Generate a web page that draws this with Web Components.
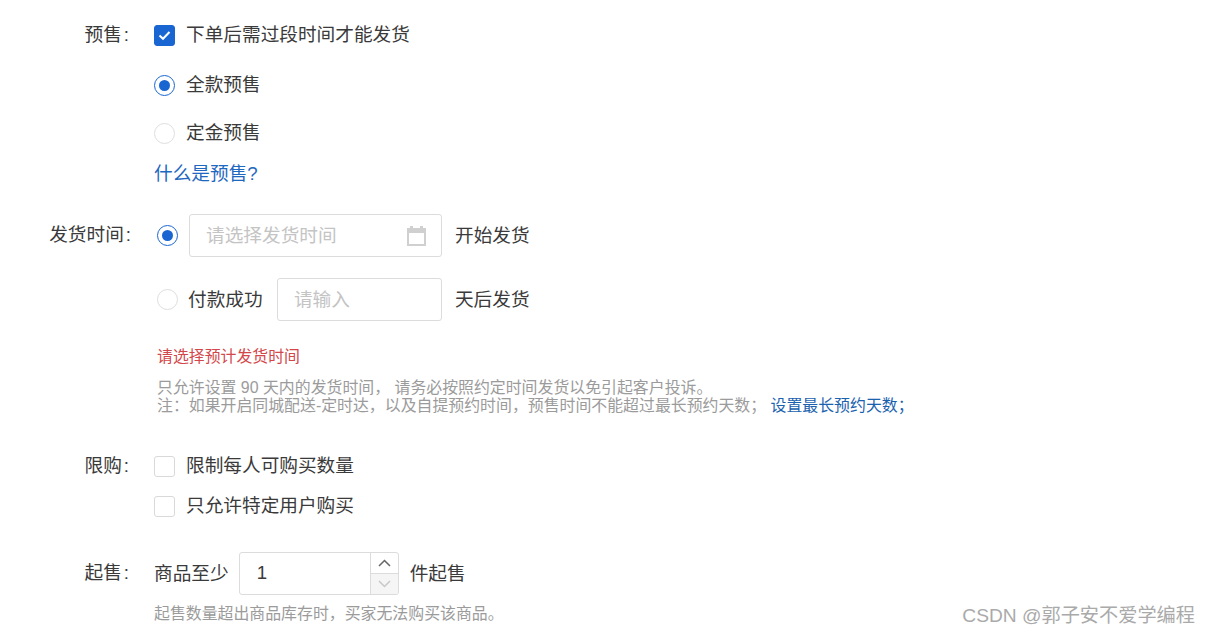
<!DOCTYPE html>
<html lang="zh-CN">
<head>
<meta charset="utf-8">
<title>预售设置</title>
<style>
  html, body { margin: 0; background: #fff; }
  body {
    width: 1210px;
    height: 635px;
    overflow: hidden;
    font: 18.67px/30px "Liberation Sans", "Noto Sans CJK SC", sans-serif;
    color: #3a3a3a;
  }
  form-page { --blue: #1966d2; }
</style>
</head>
<body>
<form-page>
  <form-row label="预售" label-pad="25" style="margin-top:20px">
    <check-box checked>下单后需过段时间才能发货</check-box>
    <radio-box checked style="margin-top:20px">全款预售</radio-box>
    <radio-box style="margin-top:18px">定金预售</radio-box>
    <help-link style="margin-top:11px">什么是预售?</help-link>
  </form-row>

  <form-row label="发货时间" label-width="157" label-pad="26" label-height="43" style="margin-top:25px">
    <inline-row>
      <radio-box checked></radio-box>
      <text-field width="253" placeholder="请选择发货时间" calendar style="margin-left:11px"></text-field>
      <span style="margin-left:13px">开始发货</span>
    </inline-row>
    <inline-row style="margin-top:21px">
      <radio-box style="--radio-gap:10px">付款成功</radio-box>
      <text-field width="165" placeholder="请输入" style="margin-left:14.3px"></text-field>
      <span style="margin-left:13px">天后发货</span>
    </inline-row>
    <hint-text kind="error" style="margin-top:26px">请选择预计发货时间</hint-text>
    <hint-text style="margin-top:12px">只允许设置 90 天内的发货时间， 请务必按照约定时间发货以免引起客户投诉。</hint-text>
    <hint-text>注：如果开启同城配送-定时达，以及自提预约时间，预售时间不能超过最长预约天数；<help-link small>设置最长预约天数；</help-link></hint-text>
  </form-row>

  <form-row label="限购" label-pad="25" style="margin-top:36px">
    <check-box>限制每人可购买数量</check-box>
    <check-box style="margin-top:10px">只允许特定用户购买</check-box>
  </form-row>

  <form-row label="起售" label-pad="25" style="margin-top:31px" label-height="43">
    <inline-row>
      <span>商品至少</span>
      <number-stepper value="1" style="margin-left:10px"></number-stepper>
      <span style="margin-left:11px">件起售</span>
    </inline-row>
    <hint-text style="margin-top:10px">起售数量超出商品库存时，买家无法购买该商品。</hint-text>
  </form-row>

  <water-mark>CSDN @郭子安不爱学编程</water-mark>
</form-page>

<script>
class FormPage extends HTMLElement {
  constructor() {
    super();
    this.attachShadow({ mode: 'open' });
    this.shadowRoot.innerHTML = `
      <style>:host{display:block;position:relative;height:635px;overflow:hidden;}
      .flow{display:flow-root;}</style>
      <div class="flow"><slot></slot></div>`;
  }
}

class FormRow extends HTMLElement {
  constructor() {
    super();
    this.attachShadow({ mode: 'open' });
    const w = this.getAttribute('label-width') || 154;
    const h = this.getAttribute('label-height') || 30;
    const pad = this.getAttribute('label-pad') || 25;
    this.shadowRoot.innerHTML = `
      <style>
        :host{display:grid;grid-template-columns:${w}px 1fr;}
        .label{box-sizing:border-box;padding-right:${pad}px;text-align:right;height:${h}px;line-height:${h - 1}px;white-space:pre;}
        .colon{margin-left:2px;}
        .body{display:flex;flex-direction:column;align-items:flex-start;}
      </style>
      <div class="label">${this.getAttribute('label')}<span class="colon">:</span></div>
      <div class="body"><slot></slot></div>`;
  }
}

class InlineRow extends HTMLElement {
  constructor() {
    super();
    this.attachShadow({ mode: 'open' });
    this.shadowRoot.innerHTML = `
      <style>:host{display:flex;align-items:center;white-space:nowrap;}</style><slot></slot>`;
  }
}

class CheckBox extends HTMLElement {
  constructor() {
    super();
    this.attachShadow({ mode: 'open' });
    const on = this.hasAttribute('checked');
    this.shadowRoot.innerHTML = `
      <style>
        :host{display:flex;align-items:center;height:30px;white-space:nowrap;}
        .box{box-sizing:border-box;width:21px;height:21px;border-radius:3px;margin-right:11px;display:flex;align-items:center;justify-content:center;
          border:1px solid ${on ? 'var(--blue)' : '#d9d9d9'};background:${on ? 'var(--blue)' : '#fff'};}
      </style>
      <span class="box">${on ? '<svg width="13" height="11" viewBox="0 0 13 11"><path d="M1.5 5.5L5 8.8 11.5 2" fill="none" stroke="#fff" stroke-width="2"/></svg>' : ''}</span>
      <slot></slot>`;
  }
}

class RadioBox extends HTMLElement {
  constructor() {
    super();
    this.attachShadow({ mode: 'open' });
    const on = this.hasAttribute('checked');
    this.shadowRoot.innerHTML = `
      <style>
        :host{display:flex;align-items:center;height:30px;white-space:nowrap;}
        .dot{box-sizing:border-box;width:21px;height:21px;border-radius:50%;display:flex;align-items:center;justify-content:center;
          border:1px solid ${on ? 'var(--blue)' : '#dedede'};background:#fff;}
        .dot i{width:11px;height:11px;border-radius:50%;background:var(--blue);}
        .text{margin-left:var(--radio-gap, 11px);}
      </style>
      <span class="dot">${on ? '<i></i>' : ''}</span>
      ${this.textContent.trim() ? '<span class="text"><slot></slot></span>' : ''}`;
  }
}

class HelpLink extends HTMLElement {
  constructor() {
    super();
    this.attachShadow({ mode: 'open' });
    const small = this.hasAttribute('small');
    this.shadowRoot.innerHTML = `
      <style>:host{display:${small ? 'inline' : 'block'};color:${small ? '#1a62ae' : '#1f68c0'};}</style><slot></slot>`;
  }
}

class TextField extends HTMLElement {
  constructor() {
    super();
    this.attachShadow({ mode: 'open' });
    this.shadowRoot.innerHTML = `
      <style>
        :host{box-sizing:border-box;display:flex;align-items:center;justify-content:space-between;
          width:${this.getAttribute('width')}px;height:43px;padding:0 15px 0 16px;
          border:1px solid #dcdcdc;border-radius:3px;background:#fff;color:#c4c4c4;white-space:nowrap;}
      </style>
      <span>${this.getAttribute('placeholder')}</span>
      ${this.hasAttribute('calendar') ? `<svg width="19" height="20" viewBox="0 0 19 20" fill="#d0d0d0"><path fill-rule="evenodd" d="M3 0h3v2h7V0h3v2h3v18H0V2h3zM2 7v11h15V7z"/></svg>` : ''}`;
  }
}

class NumberStepper extends HTMLElement {
  constructor() {
    super();
    this.attachShadow({ mode: 'open' });
    this.shadowRoot.innerHTML = `
      <style>
        :host{box-sizing:border-box;display:flex;width:160px;height:43px;border:1px solid #dcdcdc;border-radius:3px;background:#fff;}
        .value{flex:1;padding-left:17px;line-height:40px;}
        .btns{width:27px;display:flex;flex-direction:column;border-left:1px solid #dcdcdc;}
        .btns span{flex:1;display:flex;align-items:center;justify-content:center;}
        .btns .down{background:#f5f5f5;border-top:1px solid #dcdcdc;border-radius:0 0 3px 0;}
      </style>
      <div class="value">${this.getAttribute('value')}</div>
      <div class="btns">
        <span><svg width="13" height="8" viewBox="0 0 13 8"><path d="M1 7l5.5-5.5L12 7" fill="none" stroke="#666" stroke-width="1.5"/></svg></span>
        <span class="down"><svg width="13" height="8" viewBox="0 0 13 8"><path d="M1 1l5.5 5.5L12 1" fill="none" stroke="#c8c8c8" stroke-width="1.5"/></svg></span>
      </div>`;
  }
}

class HintText extends HTMLElement {
  constructor() {
    super();
    this.attachShadow({ mode: 'open' });
    const err = this.getAttribute('kind') === 'error';
    this.shadowRoot.innerHTML = `
      <style>:host{display:block;font-size:15.9px;white-space:nowrap;line-height:${err ? 20 : 18}px;color:${err ? '#d2474a' : '#9b9b9b'};}</style><slot></slot>`;
  }
}

class WaterMark extends HTMLElement {
  constructor() {
    super();
    this.attachShadow({ mode: 'open' });
    this.shadowRoot.innerHTML = `
      <style>:host{position:absolute;right:15px;top:603px;font-size:19.2px;line-height:26px;color:#aaa;white-space:nowrap;}</style><slot></slot>`;
  }
}

customElements.define('form-page', FormPage);
customElements.define('form-row', FormRow);
customElements.define('inline-row', InlineRow);
customElements.define('check-box', CheckBox);
customElements.define('radio-box', RadioBox);
customElements.define('help-link', HelpLink);
customElements.define('text-field', TextField);
customElements.define('number-stepper', NumberStepper);
customElements.define('hint-text', HintText);
customElements.define('water-mark', WaterMark);
</script>
</body>
</html>
